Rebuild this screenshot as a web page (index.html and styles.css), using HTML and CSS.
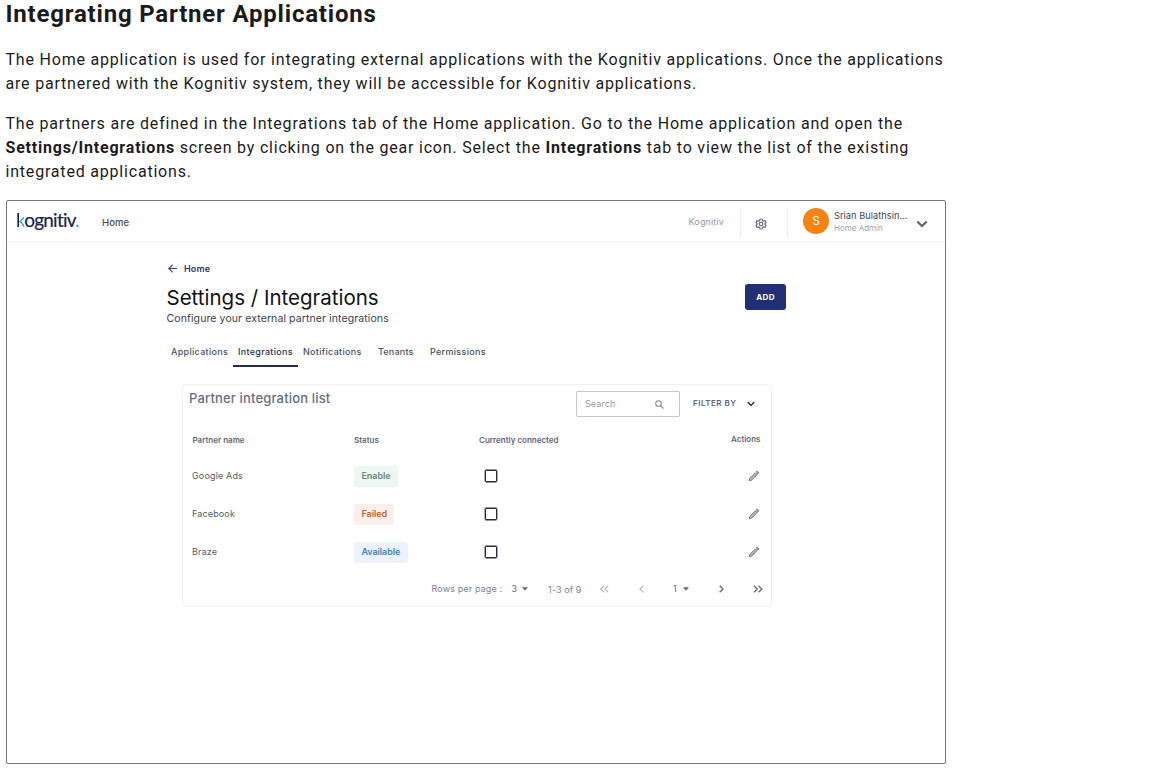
FILE: index.html
```
<!DOCTYPE html>
<html lang="en">
<head>
<meta charset="utf-8">
<title>Integrating Partner Applications</title>
<link rel="stylesheet" href="styles.css">
</head>
<body>
<svg class="defs" width="0" height="0" aria-hidden="true">
  <symbol id="pencil" viewBox="0 0 12 12"><path d="M1.300 10.700l.4-2.200 5.700-5.700 1.800 1.800-5.700 5.700zM8.200 2l1-1 1.800 1.800-1 1z" fill="#b5b5b5" stroke="#707070" stroke-width=".9" stroke-linejoin="round"/></symbol>
  <symbol id="caret" viewBox="0 0 6 4"><path d="M0 .3h6L3 3.700z" fill="#666b78"/></symbol>
</svg>
<article class="doc">
  <h2 class="title">Integrating Partner Applications</h2>
  <p class="para">The Home application is used for integrating external applications with the Kognitiv applications. Once the applications are partnered with the Kognitiv system, they will be accessible for Kognitiv applications.</p>
  <p class="para">The partners are defined in the Integrations tab of the Home application. Go to the Home application and open the <strong>Settings/Integrations</strong> screen by clicking on the gear icon. Select the <strong>Integrations</strong> tab to view the list of the existing integrated applications.</p>
  <section class="shot">
    <header class="bar">
      <div class="logo"><span class="logo-k">k</span>ognitiv<span class="logo-dot">.</span></div>
      <span class="nav-home">Home</span>
      <span class="tenant">Kognitiv</span>
      <div class="gear"><svg width="12" height="12" viewBox="0 0 24 24" fill="none" stroke="#6b7389" stroke-width="2.400" stroke-linejoin="round"><path d="M9.800 2h4.400l.6 3 2.200 1.200 3-1 2.200 3.800-2.300 2v2l2.300 2-2.200 3.800-3-1-2.200 1.200-.6 3H9.800l-.6-3L7 17.800l-3 1L1.800 15l2.300-2v-2L1.800 9 4 5.200l3 1L9.200 5z"/><circle cx="12" cy="12" r="3.600"/></svg></div>
      <div class="avatar">S</div>
      <div class="user"><span class="user-name">Srian Bulathsin...</span><span class="user-role">Home Admin</span></div>
      <svg class="user-chev" width="12" height="8" viewBox="0 0 12 8" fill="none" stroke="#596074" stroke-width="2"><path d="M1.300 1.500L6 6l4.700-4.500"/></svg>
    </header>
    <div class="page">
      <div class="back"><svg width="9" height="9" viewBox="0 0 9 9" fill="none" stroke="#354578" stroke-width="1.100"><path d="M9 4.500H1M4.600.700L.8 4.500l3.800 3.800"/></svg><span class="back-text">Home</span></div>
      <div class="head">
        <div><h1 class="heading">Settings / Integrations</h1><div class="sub">Configure your external partner integrations</div></div>
        <button class="add">ADD</button>
      </div>
      <nav class="tabs"><span class="tab t1">Applications</span><span class="tab t2">Integrations</span><span class="tab t3">Notifications</span><span class="tab t4">Tenants</span><span class="tab t5">Permissions</span></nav>
      <div class="card">
        <div class="card-top">
          <h3 class="card-title">Partner integration list</h3>
          <div class="search"><span class="search-text">Search</span><svg width="9" height="9" viewBox="0 0 9 9" fill="none" stroke="#8b8b8e" stroke-width="1.100"><circle cx="3.500" cy="3.500" r="2.800"/><path d="M5.500 5.500l3.100 3.100"/></svg></div>
          <span class="filter">FILTER BY</span>
          <svg class="filter-chev" width="8" height="6" viewBox="0 0 8 6" fill="none" stroke="#282d4d" stroke-width="1.500"><path d="M.7 1L4 4.400 7.300 1"/></svg>
        </div>
        <div class="row row-head"><span class="th-name">Partner name</span><span>Status</span><span class="th-conn">Currently connected</span><span class="th-act">Actions</span></div>
        <div class="row"><span class="name">Google Ads</span><span class="badge enable">Enable</span><span class="check"></span><svg class="edit" width="12" height="12"><use href="#pencil"/></svg></div>
        <div class="row"><span class="name">Facebook</span><span class="badge failed">Failed</span><span class="check"></span><svg class="edit" width="12" height="12"><use href="#pencil"/></svg></div>
        <div class="row"><span class="name">Braze</span><span class="badge available">Available</span><span class="check"></span><svg class="edit" width="12" height="12"><use href="#pencil"/></svg></div>
        <footer class="pager">
          <span class="rpp">Rows per page :</span><span class="num">3</span><svg class="caret" width="6" height="4"><use href="#caret"/></svg>
          <span class="range">1-3 of 9</span>
          <svg class="first" width="9" height="8" viewBox="0 0 9 8" fill="none" stroke="#b9b9b9" stroke-width="1.200"><path d="M4.200.7L.9 4l3.300 3.300M8.300.7L5 4l3.300 3.300"/></svg>
          <svg class="prev" width="5" height="8" viewBox="0 0 5 8" fill="none" stroke="#b9b9b9" stroke-width="1.200"><path d="M4.300.7L1 4l3.300 3.300"/></svg>
          <span class="num cur">1</span><svg class="caret" width="6" height="4"><use href="#caret"/></svg>
          <svg class="next" width="5" height="8" viewBox="0 0 5 8" fill="none" stroke="#6b6b70" stroke-width="1.400"><path d="M.7.7L4 4 .7 7.300"/></svg>
          <svg class="last" width="10" height="8" viewBox="0 0 10 8" fill="none" stroke="#6b6b70" stroke-width="1.300"><path d="M1 .7L4.300 4 1 7.300M5.500.7L8.800 4 5.500 7.300"/></svg>
        </footer>
      </div>
    </div>
  </section>
</article>
</body>
</html>
```
FILE: styles.css
```
* { box-sizing: border-box; }
html { background: #fff; overflow: hidden; }
body { margin: 0; font-family: Roboto, "Liberation Sans", sans-serif; color: #1b1b1d; }
.defs { display: block; height: 0; }
.doc { width: 940.500px; margin-left: 5.500px; }
.title { margin: 0; font-size: 24px; line-height: 28px; font-weight: 700; letter-spacing: .8px; }
.para { margin: 0 0 16px; font-size: 16px; line-height: 24px; letter-spacing: .8px; }
.title + .para { margin-top: 20px; }
.para strong { font-weight: 700; }
.shot { width: 940px; height: 564px; margin-left: .5px; border: 1px solid #77757b; border-radius: 2px; font-family: Inter, sans-serif; white-space: nowrap; overflow: hidden; background: #fff; }
.para + .shot { margin-top: 16px; }
.bar { display: flex; height: 41px; padding-left: 9px; border-bottom: 1px solid #eeeff2; }
.logo { width: 86px; font: 400 19px/37px Lato, sans-serif; color: #1a1f4c; letter-spacing: -.8px; -webkit-text-stroke: .2px #1a1f4c; }
.logo-k { color: transparent; -webkit-text-stroke: 0; background: linear-gradient(90deg, #1a1f4c 3px, #35a6dc 3px); -webkit-background-clip: text; background-clip: text; }
.logo-dot { color: #35a6dc; -webkit-text-stroke: 0; }
.nav-home { width: 586px; font-size: 9.500px; line-height: 43px; font-weight: 500; color: #464a5c; letter-spacing: .1px; }
.tenant { width: 52px; padding-left: .5px; font-size: 9px; line-height: 41px; color: #9498a3; letter-spacing: .15px; }
.gear { width: 48px; height: 30px; margin-top: 6px; padding: 11px 0 0 14px; border: 1px solid #e8e9ed; border-width: 0 1px; }
.gear svg { display: block; }
.avatar { width: 26px; height: 26px; margin: 7px 5px 0 15px; border-radius: 50%; background: #f4840f; color: #fff; font-size: 12px; line-height: 26px; text-align: center; }
.user { width: 82px; display: flex; flex-direction: column; padding-top: 9px; }
.user-name { font-size: 9.200px; line-height: 12px; color: #41465a; letter-spacing: .05px; }
.user-role { font-size: 8px; line-height: 12px; color: #a1a4ae; }
.user-chev { margin-top: 19px; }
.page { padding-left: 159.500px; }
.back { display: flex; align-items: center; height: 12px; margin-top: 20.500px; padding-left: 1px; }
.back-text { margin: -1px 0 0 7.500px; font-size: 9px; font-weight: 600; color: #2a3763; letter-spacing: .15px; }
.head { display: flex; justify-content: space-between; width: 619.500px; height: 51px; margin-top: 8.500px; }
.heading { margin: 2px 0 0; font-size: 20.500px; line-height: 26px; font-weight: 430; color: #111118; letter-spacing: 0; }
.sub { font-size: 10.500px; line-height: 16px; color: #3a3d50; letter-spacing: .1px; }
.add { width: 41px; height: 26px; margin-top: 1px; padding: 0; border: 0; border-radius: 3px; background: #203074; color: #fff; font: 700 8px/26px Inter, sans-serif; letter-spacing: .4px; }
.tabs { display: flex; height: 33px; padding-left: 4.500px; font-size: 9px; line-height: 36px; font-weight: 500; color: #4b5063; letter-spacing: .3px; }
.t1 { width: 62px; }
.t2 { width: 65px; height: 33px; padding-left: 5px; border-bottom: 2px solid #242a50; color: #2b3050; }
.t3 { width: 80px; padding-left: 5px; }
.t4 { width: 52px; letter-spacing: .2px; }
.card { width: 590px; height: 223px; margin: 17px 0 0 15px; border: 1px solid #eef0f3; border-radius: 4px; }
.card-top { display: flex; height: 38px; padding-left: 6.500px; }
.card-title { width: 387px; margin: 0; font-size: 13px; line-height: 27px; font-weight: 500; color: #676d80; letter-spacing: .16px; }
.search { display: flex; align-items: center; justify-content: space-between; width: 104px; height: 26px; margin-top: 6px; padding: 0 15px 0 8px; border: 1px solid #c4c6cf; border-radius: 2px; }
.search-text { margin-top: -1px; font-size: 9px; color: #999ba3; letter-spacing: .1px; }
.filter { width: 54px; margin-left: 13px; font-size: 8px; line-height: 37px; font-weight: 600; color: #5d6579; letter-spacing: .5px; }
.filter-chev { margin-top: 16px; }
.row { display: grid; grid-template-columns: 162px 125px 253px 26px; align-items: center; height: 38px; padding-left: 9.500px; font-size: 9px; color: #565a68; }
.name { margin-top: -1px; letter-spacing: .15px; }
.row-head { height: 34px; font-size: 8px; font-weight: 600; color: #626778; }
.th-name { padding-left: .5px; }
.th-act { justify-self: end; margin: 0 -2.500px 2px 0; }
.badge { justify-self: start; height: 21px; padding: 0 7.500px; border-radius: 3px; font-size: 9px; line-height: 20px; font-weight: 600; letter-spacing: -.08px; }
.enable { background: #edf6f1; color: #6f8a7b; }
.failed { background: #fbefec; color: #b9662d; }
.available { background: #ebf2fb; color: #4385bd; }
.check { width: 12px; height: 12px; margin-left: 6px; border: 1.500px solid #292a3b; border-radius: 1px; box-shadow: 0 0 0 .4px #292a3b; }
.edit { margin-left: 16px; }
.pager { display: flex; align-items: center; height: 35px; padding-left: 249px; color: #7c8291; font-size: 9px; }
.rpp { width: 80px; letter-spacing: .13px; }
.num { width: 10.500px; color: #626777; }
.range { margin: 2px 0 0 20px; width: 52px; letter-spacing: .1px; }
.prev { margin-left: 29.500px; }
.cur { margin-left: 29.500px; width: 10px; }
.next { margin-left: 30px; }
.last { margin-left: 28.500px; }
```
